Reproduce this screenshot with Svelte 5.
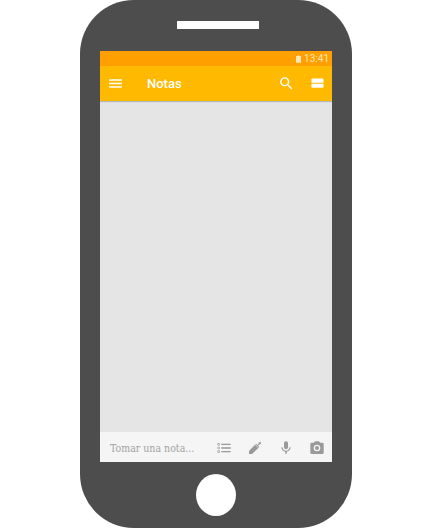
<script>
	const tools = [
		{ name: 'list', d: 'M2 6.500a2 2 0 1 0 4 0 2 2 0 0 0-4 0zm1 0a1 1 0 1 1 2 0 1 1 0 0 1-2 0zM2 12a2 2 0 1 0 4 0 2 2 0 0 0-4 0zm1 0a1 1 0 1 1 2 0 1 1 0 0 1-2 0zM2 17.500a2 2 0 1 0 4 0 2 2 0 0 0-4 0zm1 0a1 1 0 1 1 2 0 1 1 0 0 1-2 0zM8 5.500h14v2H8zM8 11h14v2H8zM8 16.500h14v2H8z' },
		{ name: 'draw', d: 'M3 21v-4.500l9-9.500 5 5-9.500 9H3zM13.500 5.500l2 2 1.500-1.500 1-2.500 2-.5 1 1-.5 2-2.500 1-1.500 1.500 2 2-1 1-5-5z' },
		{ name: 'mic', d: 'M12 14a3 3 0 0 0 3-3V5a3 3 0 0 0-6 0v6a3 3 0 0 0 3 3zm5.300-3c0 3-2.500 5.100-5.300 5.100S6.700 14 6.700 11H5c0 3.400 2.700 6.200 6 6.700V21h2v-3.300c3.300-.5 6-3.300 6-6.700h-1.700z' },
		{ name: 'camera', d: 'M9 2L7.200 4H4a2 2 0 0 0-2 2v13a2 2 0 0 0 2 2h16a2 2 0 0 0 2-2V6a2 2 0 0 0-2-2h-3.200L15 2H9zm3 15a5 5 0 1 1 0-10 5 5 0 0 1 0 10zm0-2a3 3 0 1 0 0-6 3 3 0 0 0 0 6z' }
	];
</script>

<main class="phone">
	<div class="speaker"></div>
	<section class="screen">
		<div class="status">
			<svg class="battery" viewBox="0 0 6 9"><path d="M2 0h2v1h2v8H0V1h2z" /></svg>
			<span>13:41</span>
		</div>
		<header class="toolbar">
			<svg class="icon" viewBox="0 0 24 24"><path d="M3 18h18v-2H3v2zm0-5h18v-2H3v2zm0-7v2h18V6H3z" /></svg>
			<h1>Notas</h1>
			<svg class="icon" viewBox="0 0 24 24"><path d="M15.500 14h-.79l-.28-.27A6.470 6.470 0 0 0 16 9.500 6.500 6.500 0 1 0 9.500 16c1.610 0 3.090-.59 4.230-1.570l.27.28v.79l5 4.990L20.490 19l-4.990-5zm-6 0C7.010 14 5 11.990 5 9.500S7.010 5 9.500 5 14 7.010 14 9.500 11.990 14 9.500 14z" /></svg>
			<svg class="icon" viewBox="0 0 24 24"><path d="M3.500 6a1 1 0 0 1 1-1h15a1 1 0 0 1 1 1v5H3.500zM3.500 12.200h17V17a1 1 0 0 1-1 1h-15a1 1 0 0 1-1-1z" /></svg>
		</header>
		<div class="content"></div>
		<footer class="compose">
			<span class="placeholder">Tomar una nota...</span>
			<div class="tools">
				{#each tools as tool}
					<svg class="tool" viewBox="0 0 24 24" aria-label={tool.name}><path fill-rule="evenodd" d={tool.d} /></svg>
				{/each}
			</div>
		</footer>
	</section>
	<div class="home"></div>
</main>

<style>
	:global(body) {
		background: #fff;
	}
	.phone {
		box-sizing: border-box;
		width: 272px;
		height: 528px;
		margin-left: 80px;
		padding: 21px 20px 0;
		background: #4d4d4d;
		border-radius: 54px;
		display: flex;
		flex-direction: column;
		align-items: center;
	}
	.speaker {
		width: 82px;
		height: 8px;
		margin-left: 4px;
		background: #fff;
		flex: none;
	}
	.screen {
		width: 232px;
		height: 411px;
		margin-top: 22px;
		flex: none;
		display: flex;
		flex-direction: column;
		background: #e5e5e5;
	}
	.status {
		height: 15px;
		flex: none;
		background: #ffa000;
		display: flex;
		align-items: center;
		justify-content: flex-end;
		gap: 3px;
		padding-right: 3px;
		color: #ffe6b8;
		font: 10px/15px Roboto, sans-serif;
	}
	.battery {
		width: 5px;
		height: 8px;
		fill: #ffe6b8;
	}
	.toolbar {
		height: 35px;
		flex: none;
		background: #ffb900;
		display: flex;
		align-items: center;
		gap: 14px;
		color: #fff;
		padding: 0 6px 0 7px;
		box-shadow: 0 1px 1px rgba(80, 100, 130, 0.35);
		z-index: 1;
	}
	.icon {
		width: 17px;
		height: 17px;
		fill: #fff;
		flex: none;
	}
	h1 {
		margin: 0 0 0 9px;
		flex: 1;
		font: 500 13px/35px Roboto, sans-serif;
	}
	.content {
		flex: 1;
	}
	.compose {
		height: 30px;
		flex: none;
		background: #f5f5f5;
		display: flex;
		align-items: center;
		justify-content: space-between;
		padding: 1px 7px 0 10px;
		box-sizing: border-box;
	}
	.placeholder {
		color: #a3a3a3;
		font: 10.5px "DejaVu Serif Condensed", "DejaVu Serif", serif;
		font-stretch: condensed;
	}
	.tools {
		display: flex;
		gap: 15px;
	}
	.tool {
		width: 16px;
		height: 16px;
		fill: #999;
	}
	.home {
		width: 40px;
		height: 42px;
		margin-top: 12px;
		margin-right: 1px;
		border-radius: 50%;
		background: #fff;
		flex: none;
	}
</style>
